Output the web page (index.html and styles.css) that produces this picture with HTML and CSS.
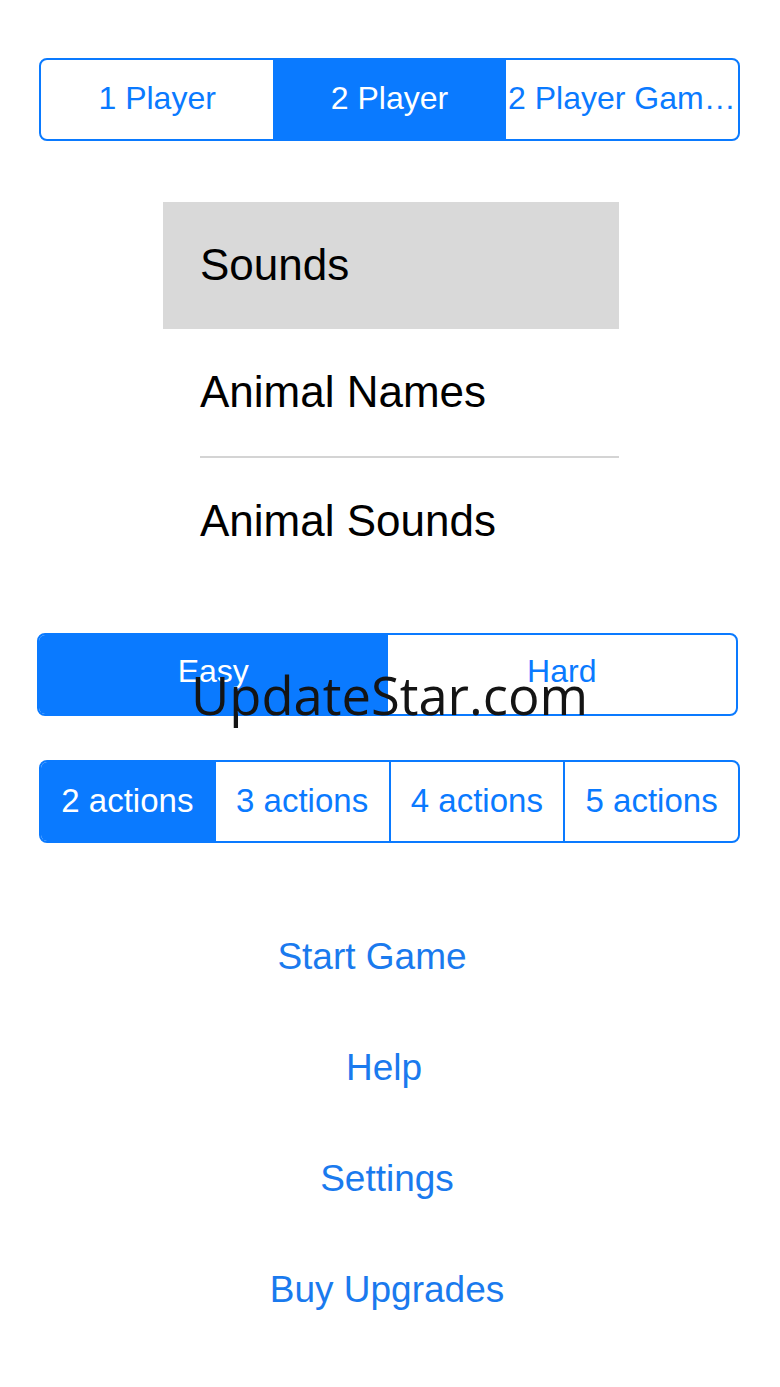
FILE: index.html
```html
<!DOCTYPE html>
<html lang="en">
<head>
<meta charset="utf-8">
<title>Game Setup</title>
<link rel="stylesheet" href="styles.css">
</head>
<body>
<div class="page">
  <div class="seg seg-players">
    <div class="seg-item">1 Player</div>
    <div class="seg-item active">2 Player</div>
    <div class="seg-item">2 Player Gam…</div>
  </div>

  <div class="list">
    <div class="row selected"><span>Sounds</span></div>
    <div class="row sep"><span>Animal Names</span></div>
    <div class="row"><span>Animal Sounds</span></div>
  </div>

  <div class="seg seg-level">
    <div class="seg-item active">Easy</div>
    <div class="seg-item">Hard</div>
  </div>

  <div class="seg seg-actions">
    <div class="seg-item active">2 actions</div>
    <div class="seg-item">3 actions</div>
    <div class="seg-item">4 actions</div>
    <div class="seg-item">5 actions</div>
  </div>

  <div class="links">
    <div class="link link-start">Start Game</div>
    <div class="link link-help">Help</div>
    <div class="link">Settings</div>
    <div class="link">Buy Upgrades</div>
  </div>

  <div class="watermark">UpdateStar.com</div>
</div>
</body>
</html>
```

FILE: styles.css
```css
html, body {
  margin: 0;
  padding: 0;
  background: #ffffff;
}

.page {
  position: relative;
  width: 780px;
  min-height: 1387px;
  font-family: "Liberation Sans", Arial, sans-serif;
  padding-top: 58px;
  box-sizing: border-box;
}

.seg {
  display: flex;
  height: 83px;
  width: 701px;
  box-sizing: border-box;
  border: 2px solid #0a7aff;
  border-radius: 8px;
  overflow: hidden;
  margin-left: 39px;
  color: #0a7aff;
  font-size: 32px;
}

.seg-item {
  flex: 1 1 0;
  display: flex;
  align-items: center;
  justify-content: center;
  white-space: nowrap;
  overflow: hidden;
  padding-bottom: 2px;
}

.seg-item.active {
  background: #0a7aff;
  color: #ffffff;
}

.seg-actions .seg-item + .seg-item {
  border-left: 2px solid #0a7aff;
}

.seg-actions {
  margin-top: 44px;
  font-size: 33px;
}

.seg-level {
  margin-top: 48px;
  margin-left: 37px;
}

.seg-level .seg-item {
  padding-bottom: 6px;
}

.list {
  margin-top: 61px;
  margin-left: 163px;
  width: 456px;
  font-size: 44px;
  color: #000000;
}

.row {
  height: 127px;
  display: flex;
  align-items: center;
  padding-left: 37px;
  box-sizing: border-box;
}

.row span {
  padding-bottom: 2px;
}

.row.selected {
  background: #d9d9d9;
}

.row.sep {
  border-bottom: 2px solid #d4d4d4;
  height: 129px;
  margin-left: 37px;
  padding-left: 0;
}

.links {
  display: flex;
  flex-direction: column;
  align-items: center;
  width: 774px;
  margin-top: 57px;
  font-size: 37px;
  color: #1a7aee;
}

.link {
  height: 111px;
  display: flex;
  align-items: center;
}

.link-start {
  margin-right: 30px;
  height: 113px;
}

.link-help {
  margin-right: 6px;
  height: 110px;
}

.watermark {
  position: absolute;
  left: 191px;
  top: 667px;
  font-family: "Open Sans", "Noto Sans", sans-serif;
  font-size: 52.5px;
  line-height: 56px;
  color: #141414;
  white-space: nowrap;
}
```
